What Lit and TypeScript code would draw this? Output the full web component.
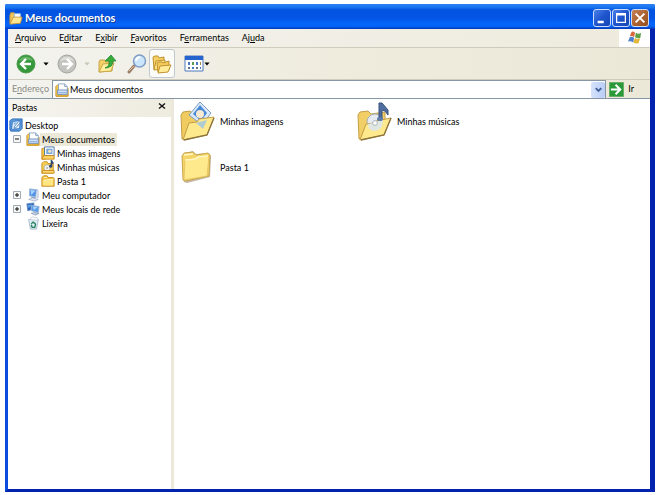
import { LitElement, html, css, svg, nothing, TemplateResult } from "lit";
import { customElement, property } from "lit/decorators.js";
import { classMap } from "lit/directives/class-map.js";

const drawings: Record<string, TemplateResult> = {
  folder: svg`
    <path d="M1 14V4l2-2h4l1 2h6l1 1v9z" fill="#f3bf3c" stroke="#c58c1e"/>
    <path d="M2 13V7l12-1v7z" fill="#ffe682"/>
    <path d="M3 4h4M3 7l11-1" stroke="#fff6c4"/>`,
  titleFolder: svg`
    <path d="M1 14V5l1-3h4l1 2h6v9z" fill="#f0c656" stroke="#c8963a"/>
    <path d="M6 3h7v6H6z" fill="#fff" stroke="#8fb2dc"/>
    <path d="M1 15L5 7h10l-2 7z" fill="#ffe890" stroke="#c8963a"/>`,
  documents: svg`
    <path d="M1 15V4l2-2h3v5l9-1v9z" fill="#f3ca52" stroke="#c0902c"/>
    <path d="M4 1h7l3 3v6H4z" fill="#fff" stroke="#8ba0bd"/>
    <path d="M11 1v3h3" fill="#cfdff7" stroke="#8ba0bd"/>
    <path d="M3 8h11v5H3z" fill="#d4e4fa" stroke="#6888bd"/>
    <path d="M4 11h9" stroke="#7da3dc"/>
    <path d="M1 15h14" stroke="#d99f28" stroke-width="1.4"/>`,
  images: svg`
    <path d="M1 15V3l4-1v13z" fill="#f8c93f" stroke="#c48d1f"/>
    <path d="M4 1h11v10H4z" fill="#f2f7ff" stroke="#4c6f9f"/>
    <path d="M6 3h7v6H6z" fill="#78a8dc"/><circle cx="10" cy="6" r="1.8" fill="#f3e4bd"/>
    <path d="M1 15l2-4h12v4z" fill="#ffd867" stroke="#c8871d"/>`,
  music: svg`
    <path d="M1 15V4l2-2h4l1 2h6v11z" fill="#f8cf50" stroke="#c48d1f"/>
    <circle cx="7" cy="9" r="3.6" fill="#f0f2f4" stroke="#a4a08c" stroke-width=".8"/><circle cx="7" cy="9" r="1" fill="#a8a48c"/>
    <path d="M12 7V1l2 3" fill="none" stroke="#2f466e" stroke-width="1.8"/><circle cx="11" cy="7" r="1.8" fill="#2f466e"/>
    <path d="M1 15l1-3h13v3z" fill="#ffda6c" stroke="#c8871d"/>`,
  desktop: svg`
    <path d="M1 3l3-2h11v11l-3 3H2l-1-2z" fill="#5a9ce2" stroke="#2a63ad"/>
    <path d="M4 4l9-1-1 9-9 1z" fill="#e2f0fe" stroke="#2c65b4" stroke-width=".8"/>
    <path d="M6 10l5-6 2 1-5 6-2 1z" fill="#fff" stroke="#3978c0"/><path d="M5 5l4 0-3 3z" fill="#7eb2e8"/>`,
  computer: svg`
    <path d="M4 1l9 1-1 8-8-1z" fill="#4f92e4" stroke="#9cb8dc"/>
    <path d="M5 2l6 1-5 5z" fill="#a5d2ff"/>
    <path d="M12 2l2 1v8l-3-1z" fill="#dbe3ee" stroke="#b0bccf" stroke-width=".7"/>
    <path d="M6 10h5v2H6z" fill="#87a8d2"/>
    <path d="M3 13l4-2 7 2-4 2z" fill="#dfe5ee" stroke="#93a3bd" stroke-width=".7"/>`,
  network: svg`
    <path d="M1 2l8-1v7l-7 2z" fill="#2b61b4" stroke="#6d94c8"/>
    <path d="M2 3l5 0-4 4z" fill="#5aa0e4"/>
    <path d="M6 4l9 1-1 7-8-2z" fill="#5c9de8" stroke="#9db9dc"/>
    <path d="M8 5l5 1-4 3z" fill="#b0d7fd"/>
    <path d="M6 13l4-1 5 1-4 2z" fill="#c7d3e6" stroke="#7489ad" stroke-width=".7"/>`,
  bin: svg`
    <path d="M3 4h11l-2 11H5z" fill="#e0ebf4" stroke="#a6b9cc"/>
    <path d="M4 4l3-3 6 1 1 3z" fill="#fafcfe" stroke="#b3c0cc" stroke-width=".7"/>
    <path d="M6 9l2-2 3 2M11 9l-1 4H7L6 10" fill="none" stroke="#24865c" stroke-width="1.6"/>`,
  back: svg`
    <circle cx="10" cy="10" r="9" fill="#35983a" stroke="#4a9a49"/>
    <path d="M3 7a8 8 0 0 1 14 0q-7-3-14 0" fill="#82c580" opacity=".7"/>
    <path d="M15 10H6M10 5l-5 5 5 5" fill="none" stroke="#fff" stroke-width="2.4"/>`,
  forward: svg`
    <circle cx="10" cy="10" r="9" fill="#c3c4bf" stroke="#a3a5a0"/>
    <path d="M3 7a8 8 0 0 1 14 0q-7-3-14 0" fill="#dfdfda"/>
    <path d="M5 10h9M10 5l5 5-5 5" fill="none" stroke="#fff" stroke-width="2.4"/>`,
  up: svg`
    <path d="M2 18V8l1-2h5l1 2 7-1-1 10z" fill="#f3d067" stroke="#c9a748"/>
    <path d="M2 18l4-8 11-1-3 8z" fill="#fff09f" stroke="#c9a748"/>
    <path d="M8 14q5-2 4-7H8l6-6 5 6h-3q0 7-8 7z" fill="#37ab3b" stroke="#2a8834" stroke-width=".8"/>`,
  search: svg`
    <path d="M7 12l-5 6" stroke="#9d7f68" stroke-width="3" stroke-linecap="round"/>
    <path d="M7 12l-5 5" stroke="#e0c09c"/>
    <circle cx="12.5" cy="7" r="6" fill="#cbe6fb" stroke="#7f9ec6" stroke-width="1.5"/>
    <path d="M9 7q0-3 4-4" fill="none" stroke="#fff" stroke-width="2"/>`,
  folders: svg`
    <path d="M2 16L1 3l2-1h3l1 2 5-1v4" fill="#f5d165" stroke="#bf912f"/>
    <path d="M2 16L4 7l9-1-1 9z" fill="#ffe788" stroke="#bf912f"/>
    <path d="M6 18L5 9l2-1h3l1 1 6-2v9z" fill="#f4ca5b" stroke="#bf912f"/>
    <path d="M6 19l2-7 11-1-3 7z" fill="#ffeb98" stroke="#bf912f"/>`,
  views: svg`
    <path d="M1 2h18v15H1z" fill="#fff" stroke="#4d79bc"/><path d="M1 2h18v4H1z" fill="#2464cc"/>
    <g fill="#4676c5"><path d="M4 8h2v3H4z"/><path d="M8 8h2v3H8z" fill="#5c9a55"/><path d="M12 8h2v3h-2z"/><path d="M16 8h1v3h-1z" fill="#a5854f"/>
    <path d="M4 13h2v2H4z" fill="#5e6d88"/><path d="M8 13h2v2H8z"/><path d="M12 13h2v2h-2z" fill="#68757f"/><path d="M16 13h1v2h-1z"/></g>`,
  go: svg`
    <path d="M.5.5h15v15H.5z" fill="#2c9939" stroke="#63ad68"/>
    <path d="M2 8h10M7 3l5 5-5 5" fill="none" stroke="#fff" stroke-width="2.2"/>`,
  flag: svg`
    <path d="M4 1q2-1 4 1L7 7Q5 5 2 6z" fill="#d9683f"/><path d="M9 2q3 2 6 0l-1 6q-3 1-6-1z" fill="#5fa144"/>
    <path d="M2 7q3-1 5 1l-1 5Q3 11 0 12z" fill="#4c82cc"/><path d="M8 8q3 2 6 0l-2 6q-3 1-6-1z" fill="#e5b63c"/>`,
  chevron: svg`<path d="M4 6l4 4 4-4" fill="none" stroke="#40619a" stroke-width="2.8"/>`,
  caret: svg`<path d="M1 4h14l-7 8z" fill="currentColor"/>`,
  minimize: svg`<path d="M3 11h7v3H3z" fill="#fff"/>`,
  maximize: svg`<path d="M3 3h10v10H3z" fill="none" stroke="#fff" stroke-width="1.4"/><path d="M3 4h10" stroke="#fff" stroke-width="2.4"/>`,
  close: svg`<path d="M3 3l10 10M13 3L3 13" stroke="#fff" stroke-width="2.2"/>`,
  closePane: svg`<path d="M2 3l12 10M14 3L2 13" stroke="#111" stroke-width="2.8"/>`,
  minus: svg`<path d="M1 1h14v14H1z" fill="#f7f7f3" stroke="#a0abb6" stroke-width="2"/><path d="M4 8h8" stroke="#111" stroke-width="2"/>`,
  plus: svg`<path d="M1 1h14v14H1z" fill="#f7f7f3" stroke="#a0abb6" stroke-width="2"/><path d="M4 8h8M8 4v8" stroke="#111" stroke-width="2"/>`,
  bigFolder: svg`
    <path d="M4 34L2 9l3-4 8-2 3 3 13-1 2 3-1 21-23 6z" fill="#9a8a62" opacity=".6"/>
    <path d="M3 32L2 8l2-3 9-1 3 3 12-2 2 2-1 21-24 5z" fill="#f4d466" stroke="#c9a750"/>
    <path d="M4 32L5 12q10 0 13-3l11-1-2 20z" fill="#ffe98d" stroke="#e3c25c" stroke-width=".8"/>
    <path d="M5 12q10 0 13-3l10-1M4 7l9-1" fill="none" stroke="#fff8c6" stroke-width="1.6"/>`,
  bigImages: svg`
    <path d="M2 37L1 13l2-3 7-1 3 3 15-2v21z" fill="#f0cb60" stroke="#c39e48"/>
    <path d="M20 0l11 11-9 12L9 13z" fill="#dbe9f8" stroke="#7e9cc0"/>
    <path d="M20 3l7 8-6 8-8-7z" fill="#4687d6"/><circle cx="20" cy="12" r="4" fill="#f7ead1"/>
    <path d="M3 38l6-17 8-1 2-3 15-2-7 18z" fill="#ffe98d" stroke="#c39e48"/>
    <path d="M16 21l11-3-4 9z" fill="#9bc4e5" opacity=".8"/>
    <path d="M4 38l23-5 7-17" fill="none" stroke="#8b7339" stroke-width="1.3"/>`,
  bigMusic: svg`
    <path d="M2 37L1 13l2-3 8-1 3 3 14-2v21z" fill="#f2cf66" stroke="#c39e48"/>
    <circle cx="18" cy="20" r="8" fill="#e5ebf1" stroke="#a5afbb"/>
    <path d="M3 38l6-16 8-1 2-2 15-3-7 17z" fill="#ffe98d" stroke="#c39e48"/>
    <path d="M11 22l15-4q0 11-9 11-6 0-6-7z" fill="#dbe6ee" opacity=".85"/><circle cx="18" cy="21" r="2.4" fill="#fff" stroke="#abb5c0"/>
    <path d="M22 16V1l3 0 6 7v5l-3-4-3-1v9z" fill="#506f9f" stroke="#37527f"/>
    <ellipse cx="23" cy="17" rx="3" ry="2" fill="#607daa"/>
    <path d="M4 38l23-5 7-17" fill="none" stroke="#8b7339" stroke-width="1.3"/>`,
};

@customElement("xp-icon")
class XpIcon extends LitElement {
  @property() name = "";
  @property() box = "0 0 16 16";
  static styles = css`
    :host { display: block; flex: none; width: 14px; height: 14px; }
    svg { display: block; width: 100%; height: 100%; }
  `;
  render() {
    return html`<svg viewBox=${this.box} aria-hidden="true">${drawings[this.name]}</svg>`;
  }
}

interface TreeNode {
  label: string;
  icon: string;
  selected?: boolean;
  expander?: "plus" | "minus";
  children?: TreeNode[];
}

const menus = [
  ["", "A", "rquivo"], ["E", "d", "itar"], ["E", "x", "ibir"],
  ["", "F", "avoritos"], ["F", "e", "rramentas"], ["Aj", "u", "da"],
];

const places: TreeNode[] = [
  {
    label: "Meus documentos", icon: "documents", expander: "minus", selected: true,
    children: [
      { label: "Minhas imagens", icon: "images" },
      { label: "Minhas músicas", icon: "music" },
      { label: "Pasta 1", icon: "folder" },
    ],
  },
  { label: "Meu computador", icon: "computer", expander: "plus" },
  { label: "Meus locais de rede", icon: "network", expander: "plus" },
  { label: "Lixeira", icon: "bin" },
];

const files = [
  { label: "Minhas imagens", icon: "bigImages" },
  { label: "Minhas músicas", icon: "bigMusic" },
  { label: "Pasta 1", icon: "bigFolder" },
];

@customElement("app-root")
class AppRoot extends LitElement {
  static styles = css`
    :host { display: block; min-height: 100vh; box-sizing: border-box; padding: 4px 3px 3px 5px; background: #fff;
      font: 9px/14px Lato, "Liberation Sans", sans-serif; color: #000; }
    * { box-sizing: border-box; }
    button, input { font: inherit; color: inherit; border: 0; margin: 0; padding: 0; background: none; }
    button { display: flex; align-items: center; justify-content: center; flex: none; }
    ul { list-style: none; margin: 0; padding: 0; }
    .window { display: flex; flex-direction: column; min-height: calc(100vh - 7px);
      border-radius: 2px 2px 0 0; background: #0640c8; overflow: hidden; }
    .title { display: flex; align-items: center; height: 25px; padding: 3px 6px 0 4px; gap: 2px; color: #fff;
      background: linear-gradient(#2b80f2, #1a78f0 12%, #0353e0 24%, #0354e4 55%, #0566fb 80%, #0560f4 90%, #0238b4); }
    .title h1 { flex: 1; margin: 0; font: bold 11px/16px Lato, sans-serif; text-shadow: 1px 1px 0 #123c93; }
    .controls { display: flex; gap: 1px; }
    .control { width: 18px; height: 18px; border: 1px solid #cddcf8; border-radius: 3px;
      background: linear-gradient(135deg, #4a80ea, #1e54cc 50%, #1746b5); }
    .control.close { background: linear-gradient(135deg, #c58057, #ad6433 50%, #93501f); }
    .body { flex: 1; display: flex; flex-direction: column; border: solid #0a45d2; border-width: 0 5px 3px 3px;
      border-color: #0a45d2 #0223ae #0223ae #0b4bdd; background: #fff; }
    .menu { display: flex; height: 19px; border-bottom: 1px solid #cfccbd; background: linear-gradient(90deg, #f3f2ed, #eeebdd); }
    .menu nav { flex: 1; display: flex; align-items: center; gap: 13px; padding-left: 7px; }
    .brand { display: flex; align-items: center; justify-content: center; width: 31px; background: #fff; }
    .tools { display: flex; align-items: center; height: 32px; padding-left: 7px; border-bottom: 1px solid #cfccbd;
      background: linear-gradient(90deg, #f3f3ef, #efecde 50%, #ece8d8); }
    .tool { width: 21px; height: 27px; }
    .tools xp-icon, .tool xp-icon { width: 20px; height: 20px; }
    .drop { width: 11px; height: 27px; margin: 0 5px 0 4px; }
    .drop xp-icon { width: 6px; height: 6px; }
    .drop.off { color: #c6c3b4; margin-right: 4px; }
    .drop.near { margin: 0; width: 6px; }
    .gap { margin-right: 9px; }
    .pressed { width: 26px; height: 29px; border: 1px solid #c0c8d0; border-radius: 3px; background: #fbfbf8; margin: 0 8px 0 2px; }
    .address { display: flex; align-items: center; height: 19px; padding: 0 16px 0 4px; gap: 3px;
      background: linear-gradient(90deg, #f3f3ef, #ece8d8); border-bottom: 1px solid #8696a5; }
    .address label { color: #8b8b85; }
    .field { flex: 1; display: flex; align-items: center; align-self: stretch; min-width: 0;
      border: 1px solid #8696a5; border-bottom: 0; background: #fff; padding-left: 2px; gap: 1px; }
    .field input { flex: 1; min-width: 0; height: 16px; outline: 0; }
    .open { width: 14px; height: 16px; background: linear-gradient(90deg, #d6e2fc, #b9cdf6); border-radius: 2px; }
    .open xp-icon { width: 11px; height: 11px; }
    .go { gap: 4px; height: 17px; }
    .go xp-icon { width: 15px; height: 15px; }
    .panes { flex: 1; display: grid; grid-template-columns: 166px 1fr; }
    .side { border-right: 3px solid #ece9dc; }
    .side header { display: flex; align-items: center; justify-content: space-between; height: 18px; padding: 0 5px 0 4px;
      background: linear-gradient(90deg, #f5f4ef, #eeebdf); }
    .side h2 { margin: 0; font: inherit; }
    .side header button { width: 9px; height: 14px; padding-bottom: 4px; }
    .side header xp-icon { width: 8px; height: 8px; }
    .tree { padding-top: 1px; }
    .row { display: flex; align-items: center; height: 14px; gap: 1px; }
    .root { padding-left: 1px; }
    .nested { padding-left: 5px; }
    .deep { padding-left: 15px; }
    .twist { width: 8px; height: 14px; margin-right: 4px; }
    .twist xp-icon { width: 8px; height: 8px; }
    .row > xp-icon { margin-right: -1px; }
    .name { height: 13px; padding: 0 2px; line-height: 13px; }
    .name.selected { background: #ece9d8; }
    .files { display: grid; grid-template-columns: repeat(auto-fill, 177px); grid-auto-rows: 46px; align-content: start; padding: 0 6px; }
    .file { display: flex; align-items: center; justify-content: flex-start; gap: 5px; height: 46px; }
    .file xp-icon { width: 35px; height: 40px; }
  `;

  private node(n: TreeNode): TemplateResult {
    return html`<li role="treeitem" aria-selected=${n.selected ? "true" : "false"}>
      <div class="row">
        ${n.expander
          ? html`<button class="twist" aria-label="Expandir ${n.label}"><xp-icon name=${n.expander}></xp-icon></button>`
          : html`<span class="twist"></span>`}
        <xp-icon name=${n.icon}></xp-icon>
        <button class=${classMap({ name: true, selected: !!n.selected })}>${n.label}</button>
      </div>
      ${n.children ? html`<ul class="deep" role="group">${n.children.map((c) => this.node(c))}</ul>` : nothing}
    </li>`;
  }

  render() {
    return html`<main class="window">
      <header class="title">
        <xp-icon name="titleFolder"></xp-icon><h1>Meus documentos</h1>
        <div class="controls">
          <button class="control" aria-label="Minimizar"><xp-icon name="minimize"></xp-icon></button>
          <button class="control" aria-label="Maximizar"><xp-icon name="maximize"></xp-icon></button>
          <button class="control close" aria-label="Fechar"><xp-icon name="close"></xp-icon></button>
        </div>
      </header>
      <div class="body">
        <div class="menu">
          <nav>${menus.map(([a, key, b]) => html`<button><span>${a}<u>${key}</u>${b}</span></button>`)}</nav>
          <div class="brand"><xp-icon name="flag"></xp-icon></div>
        </div>
        <div class="tools">
          <button class="tool" aria-label="Voltar"><xp-icon name="back" box="0 0 20 20"></xp-icon></button>
          <button class="drop" aria-label="Histórico anterior"><xp-icon name="caret"></xp-icon></button>
          <button class="tool" aria-label="Avançar"><xp-icon name="forward" box="0 0 20 20"></xp-icon></button>
          <button class="drop off" aria-label="Histórico seguinte"><xp-icon name="caret"></xp-icon></button>
          <button class="tool gap" aria-label="Acima"><xp-icon name="up" box="0 0 20 20"></xp-icon></button>
          <button class="tool" aria-label="Pesquisar"><xp-icon name="search" box="0 0 20 20"></xp-icon></button>
          <button class="tool pressed" aria-label="Pastas" aria-pressed="true"><xp-icon name="folders" box="0 0 20 20"></xp-icon></button>
          <button class="tool" aria-label="Modos de exibição"><xp-icon name="views" box="0 0 20 20"></xp-icon></button>
          <button class="drop near" aria-label="Escolher modo"><xp-icon name="caret"></xp-icon></button>
        </div>
        <div class="address">
          <label for="path">E<u>n</u>dereço</label>
          <div class="field">
            <xp-icon name="documents"></xp-icon>
            <input id="path" value="Meus documentos">
            <button class="open" aria-label="Abrir lista"><xp-icon name="chevron"></xp-icon></button>
          </div>
          <button class="go"><xp-icon name="go"></xp-icon>Ir</button>
        </div>
        <div class="panes">
          <aside class="side">
            <header><h2>Pastas</h2><button aria-label="Fechar painel"><xp-icon name="closePane"></xp-icon></button></header>
            <ul class="tree" role="tree">
              <li role="treeitem">
                <div class="row root"><xp-icon name="desktop"></xp-icon><button class="name">Desktop</button></div>
                <ul class="nested" role="group">${places.map((p) => this.node(p))}</ul>
              </li>
            </ul>
          </aside>
          <section class="files">
            ${files.map((f) => html`<button class="file"><xp-icon name=${f.icon} box="0 0 35 40"></xp-icon>${f.label}</button>`)}
          </section>
        </div>
      </div>
    </main>`;
  }
}
